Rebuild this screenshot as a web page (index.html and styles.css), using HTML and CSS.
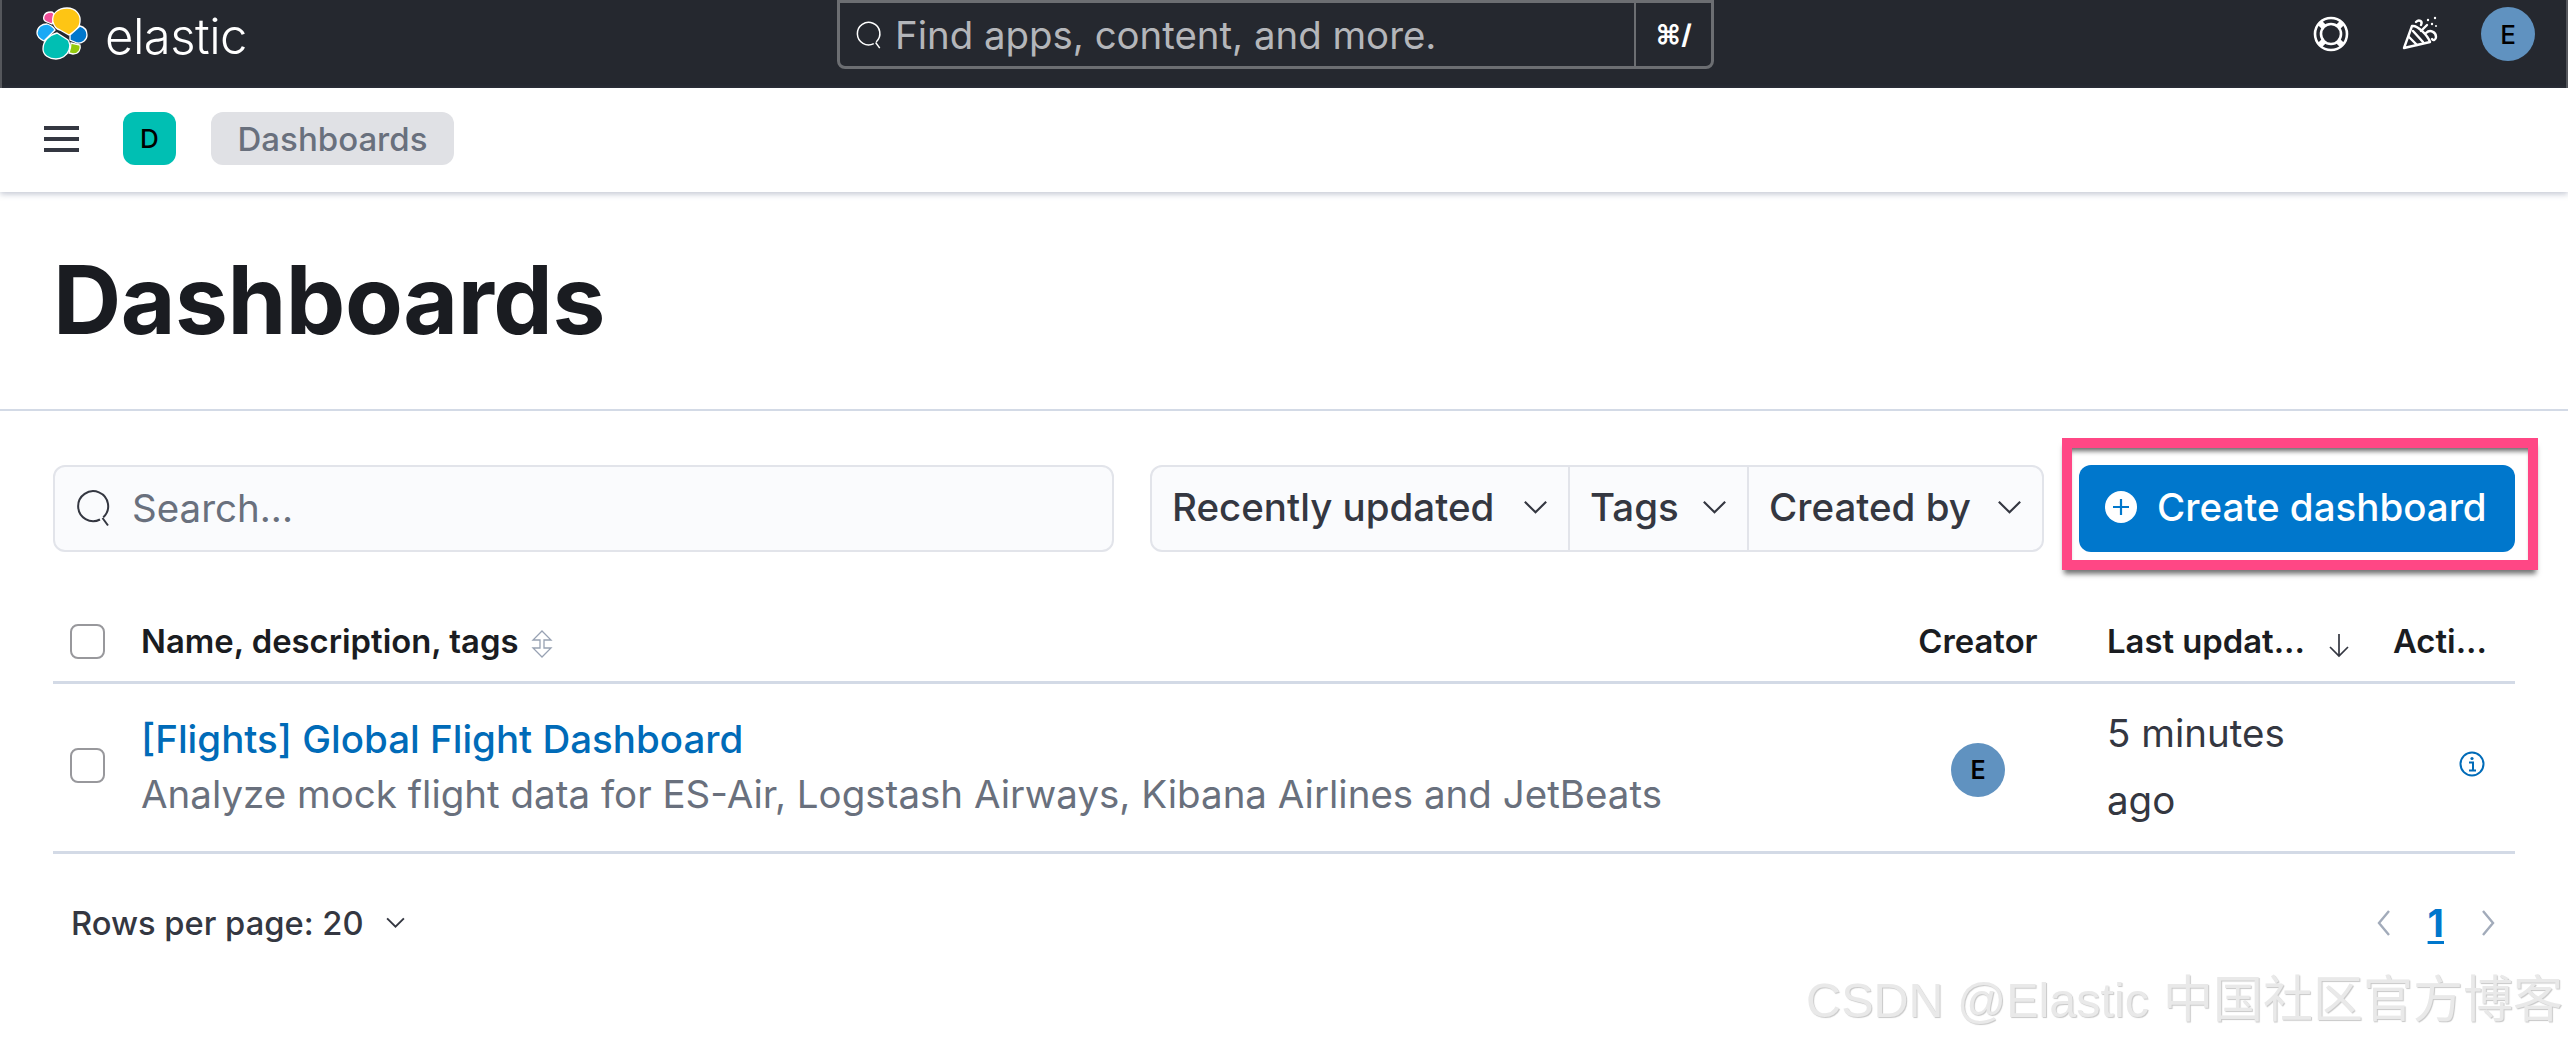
FILE: index.html
```html
<!DOCTYPE html>
<html lang="en">
<head>
    <meta charset="utf-8">
    <title>Dashboards - Elastic</title>
    <link rel="stylesheet" href="styles.css">
</head>
<body>
<div class="topbar">
    <div class="brand">
        <svg class="brand-logo" viewBox="0 0 54 54">
            <g stroke="#fff" stroke-width="1.3">
                <path d="M9 9 C10 6 13 5 16 5 C18 5 19 7 19 9 C19 12 18 14 17 17 L12 15 C9 14 8 12 9 9Z" fill="#f04e98"/>
                <path d="M18 15 C16 6 24 1 32 1 C41 1 46 8 45 15 C45 20 41 24 34 28 L25 23 C21 22 19 19 18 15Z" fill="#fec514"/>
                <path d="M2 26 C2 20 7 17 12 17 C15 18 18 19 20 23 L9 34 C5 32 2 30 2 26Z" fill="#1ba9f5"/>
                <path d="M35 28 L45 19 C49 20 52 23 52 28 C52 33 47 37 42 36 L35 33Z" fill="#0077cc"/>
                <path d="M8 42 C8 34 14 28 22 26 L33 33 C35 36 35 40 34 43 C32 49 26 52 21 52 C14 52 8 48 8 42Z" fill="#00bfb3"/>
                <path d="M36 36 L45 38 C46 42 44 47 38 47 L34 46 C35 43 36 40 36 36Z" fill="#93c90e"/>
            </g>
        </svg>
        <span class="brand-name">elastic</span>
    </div>
    <div class="globalsearch">
        <div class="globalsearch-input">
            <svg class="globalsearch-icon" viewBox="0 0 16 16">
                <path d="M11.3 11.7 A6 6 0 1 0 10 12.6 M11 12 L13.2 15" fill="none" stroke="#fff" stroke-width="0.8"/>
            </svg>
            <span>Find apps, content, and more.</span>
        </div>
        <div class="globalsearch-key">⌘/</div>
    </div>
    <div class="topbar-right">
        <svg class="topbar-icon" viewBox="0 0 36 36">
            <g fill="none" stroke="#fff">
                <circle cx="18" cy="18" r="16" stroke-width="2.6"/>
                <circle cx="18" cy="18" r="10" stroke-width="2.6"/>
                <path d="M7 7 L11 11 M29 7 L25 11 M7 29 L11 25 M29 29 L25 25" stroke-width="6"/>
            </g>
        </svg>
        <svg class="topbar-icon party" viewBox="0 0 36 36">
            <g fill="none" stroke="#fff" stroke-width="2.4" stroke-linejoin="round" stroke-linecap="round">
                <path d="M10 10 L2 32 L28 26 C26 20 16 9 10 10Z"/>
                <path d="M7 21 L15 29 M11 15 L21 26"/>
                <path d="M14 6 C17 3 21 5 19 9 M19 15 L25 9 M24 17 C28 13 34 16 34 21 C34 24 31 25 30 23"/>
            </g>
            <g fill="#fff">
                <circle cx="26" cy="4" r="1.2"/>
                <circle cx="33" cy="2" r="1.2"/>
                <circle cx="30" cy="8" r="1.2"/>
                <circle cx="34" cy="10" r="1"/>
            </g>
        </svg>
        <div class="avatar avatar-user">E</div>
    </div>
</div>

<div class="subnav">
    <div class="hamburger"><i></i><i></i><i></i></div>
    <div class="space-badge">D</div>
    <div class="crumb">Dashboards</div>
</div>

<div class="pageheader">
    <h1>Dashboards</h1>
</div>

<div class="content">
    <div class="toolbar">
        <div class="searchbox">
            <svg class="searchbox-icon" viewBox="0 0 16 16">
                <path d="M11.3 11.7 A6 6 0 1 0 10 12.6 M11 12 L13.2 15" fill="none" stroke="#343741" stroke-width="0.8"/>
            </svg>
            <span>Search...</span>
        </div>
        <div class="filters">
            <div class="filter">Recently updated
                <svg class="chev" viewBox="0 0 20 12"><path d="M2 2 L10 10 L18 2" fill="none" stroke="#343741" stroke-width="1.6"/></svg>
            </div>
            <div class="filter">Tags
                <svg class="chev" viewBox="0 0 20 12"><path d="M2 2 L10 10 L18 2" fill="none" stroke="#343741" stroke-width="1.6"/></svg>
            </div>
            <div class="filter">Created by
                <svg class="chev" viewBox="0 0 20 12"><path d="M2 2 L10 10 L18 2" fill="none" stroke="#343741" stroke-width="1.6"/></svg>
            </div>
        </div>
        <div class="highlight">
            <button class="btncreate">
                <svg class="plus" viewBox="0 0 32 32">
                    <circle cx="16" cy="16" r="16" fill="#fff"/>
                    <path d="M16 8 V24 M8 16 H24" stroke="#0077cc" stroke-width="2.2"/>
                </svg>
                Create dashboard
            </button>
        </div>
    </div>

    <table class="listtable">
        <colgroup>
            <col class="col-check">
            <col>
            <col class="col-creator">
            <col class="col-updated">
            <col class="col-actions">
        </colgroup>
        <thead>
        <tr>
            <th><span class="checkbox"></span></th>
            <th>Name, description, tags
                <svg class="sorticon" viewBox="0 0 22 28">
                    <path d="M11 1 L20 10 H13 V18 H20 L11 27 L2 18 H9 V10 H2Z" fill="none" stroke="#98a2b3" stroke-width="1.3"/>
                </svg>
            </th>
            <th class="creatorcell">Creator</th>
            <th>Last updat...
                <svg class="sortdown" viewBox="0 0 24 26">
                    <path d="M12 2 V24 M3 15 L12 24 L21 15" fill="none" stroke="#343741" stroke-width="1.7"/>
                </svg>
            </th>
            <th>Acti...</th>
        </tr>
        </thead>
        <tbody>
        <tr>
            <td><span class="checkbox"></span></td>
            <td>
                <a class="dashlink" href="#">[Flights] Global Flight Dashboard</a>
                <div class="dashdesc">Analyze mock flight data for ES-Air, Logstash Airways, Kibana Airlines and JetBeats</div>
            </td>
            <td class="creatorcell"><div class="avatar avatar-row">E</div></td>
            <td class="updated">5 minutes ago</td>
            <td class="actioncell">
                <svg class="infoicon" viewBox="0 0 26 26">
                    <circle cx="13" cy="13" r="11.5" fill="none" stroke="#006bb8" stroke-width="2"/>
                    <circle cx="13" cy="7.5" r="1.6" fill="#006bb8"/>
                    <path d="M10 11.5 H14 V19 M10 19.5 H17" fill="none" stroke="#006bb8" stroke-width="2"/>
                </svg>
            </td>
        </tr>
        </tbody>
    </table>

    <div class="pager">
        <div class="rows">Rows per page: 20
            <svg class="chev-small" viewBox="0 0 20 12"><path d="M2 2 L10 10 L18 2" fill="none" stroke="#343741" stroke-width="1.8"/></svg>
        </div>
        <div class="pages">
            <svg class="pagechev" viewBox="0 0 14 28"><path d="M12 2 L2 14 L12 26" fill="none" stroke="#a2abba" stroke-width="2.4"/></svg>
            <a class="pagenum" href="#">1</a>
            <svg class="pagechev" viewBox="0 0 14 28"><path d="M2 2 L12 14 L2 26" fill="none" stroke="#a2abba" stroke-width="2.4"/></svg>
        </div>
    </div>
</div>

<div class="watermark"><span class="watermark-latin">CSDN @Elastic</span> 中国社区官方博客</div>
</body>
</html>
```

FILE: styles.css
```css
* {
    box-sizing: border-box;
}

html, body {
    height: 100%;
}

body {
    margin: 0;
    background-color: #fff;
    font-family: Inter, "Liberation Sans", sans-serif;
    color: #343741;
    overflow: hidden;
    position: relative;
}

.topbar {
    display: flex;
    align-items: flex-start;
    height: 88px;
    background-color: #25282f;
    border-left: 2px solid #55575c;
    border-right: 2px solid #55575c;
    position: relative;
}

.brand {
    display: flex;
    align-items: center;
    width: 835px;
    height: 68px;
    padding-left: 33px;
}

.brand-logo {
    width: 54px;
    height: 54px;
}

.brand-name {
    margin-left: 16px;
    margin-top: 4px;
    font-size: 49px;
    font-weight: 300;
    letter-spacing: -0.5px;
    color: #fff;
}

.globalsearch {
    display: flex;
    width: 877px;
    height: 69px;
    border: 3px solid #6c6e72;
    border-radius: 0 0 8px 8px;
}

.globalsearch-input {
    display: flex;
    align-items: center;
    flex: 1;
    padding-left: 15px;
    font-size: 38.4px;
    color: #b4b6ba;
}

.globalsearch-icon {
    width: 30px;
    height: 30px;
    margin-right: 10px;
}

.globalsearch-key {
    display: flex;
    align-items: center;
    justify-content: center;
    width: 77px;
    border-left: 2px solid #6c6e72;
    font-size: 27px;
    font-weight: 700;
    color: #fff;
}

.topbar-right {
    display: flex;
    align-items: center;
    margin-left: auto;
    height: 68px;
    padding-right: 31px;
}

.topbar-icon {
    width: 36px;
    height: 36px;
    margin-right: 53px;
}

.party {
    margin-right: 43px;
}

.avatar {
    display: flex;
    align-items: center;
    justify-content: center;
    width: 54px;
    height: 54px;
    border-radius: 50%;
    background-color: #6092c0;
    color: #000;
    font-weight: 500;
}

.avatar-user {
    font-size: 26px;
}

.avatar-row {
    font-size: 25px;
    font-weight: 600;
    margin: 5px auto 0;
}

.subnav {
    display: flex;
    align-items: center;
    height: 104px;
    padding-left: 44px;
    padding-bottom: 3px;
    box-shadow: 0 2px 6px rgba(100, 110, 140, 0.4);
    position: relative;
}

.hamburger {
    display: flex;
    flex-direction: column;
    gap: 7px;
    width: 35px;
    margin-right: 44px;
}

.hamburger i {
    display: block;
    height: 4px;
    background-color: #343741;
}

.space-badge {
    display: flex;
    align-items: center;
    justify-content: center;
    width: 53px;
    height: 53px;
    margin-right: 35px;
    border-radius: 12px;
    background-color: #00bfb3;
    color: #000;
    font-size: 26px;
    font-weight: 500;
}

.crumb {
    display: flex;
    align-items: center;
    justify-content: center;
    width: 243px;
    height: 53px;
    border-radius: 12px;
    background-color: #e0e1e5;
    color: #69707d;
    font-size: 33px;
    font-weight: 500;
}

.pageheader {
    height: 219px;
    padding: 53px 53px 0;
    border-bottom: 2px solid #d3dae6;
}

.pageheader h1 {
    margin: 0;
    font-size: 94.5px;
    line-height: 110px;
    font-weight: 700;
    letter-spacing: -0.5px;
    color: #1a1c21;
}

.content {
    padding: 54px 53px 0;
}

.toolbar {
    display: flex;
    align-items: stretch;
    height: 87px;
}

.searchbox {
    display: flex;
    align-items: center;
    width: 1061px;
    margin-right: 36px;
    padding-left: 20px;
    padding-bottom: 1px;
    background-color: #fafbfd;
    border: 2px solid #e2e4ea;
    border-radius: 12px;
    font-size: 38.5px;
    color: #69707d;
}

.searchbox-icon {
    width: 40px;
    height: 40px;
    margin-right: 17px;
}

.filters {
    display: flex;
    width: 894px;
    background-color: #fafbfd;
    border: 2px solid #e2e4ea;
    border-radius: 12px;
}

.filter {
    display: flex;
    align-items: center;
    padding-left: 20px;
    padding-bottom: 3px;
    font-size: 38.5px;
    font-weight: 500;
    color: #343741;
    white-space: nowrap;
    border-left: 2px solid #e2e4ea;
}

.filter:first-child {
    width: 416px;
    border-left: 0;
}

.filter:nth-child(2) {
    width: 179px;
}

.filter:last-child {
    flex: 1;
}

.chev {
    width: 27px;
    height: 16px;
    margin-left: auto;
    margin-right: 19px;
}

/* pink box drawn round the button in the screenshot */
.highlight {
    display: flex;
    margin: -27px -23px -18px 18px;
    padding: 17px 13px 8px 7px;
    border: 10px solid #ff4785;
    box-shadow: inset 0 6px 5px -3px rgba(0, 0, 0, 0.6), 0 6px 5px -2px rgba(0, 0, 0, 0.55);
}

.btncreate {
    display: flex;
    align-items: center;
    flex: none;
    width: 436px;
    margin: 0;
    padding: 0 0 3px 26px;
    border: 0;
    border-radius: 12px;
    background-color: #0077cc;
    color: #fff;
    font-family: inherit;
    font-size: 38.5px;
    font-weight: 500;
    white-space: nowrap;
}

.plus {
    width: 32px;
    height: 32px;
    margin-right: 20px;
}

.listtable {
    width: 100%;
    margin-top: 50px;
    border-collapse: collapse;
    table-layout: fixed;
}

.col-check {
    width: 88px;
}

.col-creator {
    width: 189px;
}

.col-updated {
    width: 286px;
}

.col-actions {
    width: 122px;
}

.listtable th {
    height: 80px;
    padding: 0;
    text-align: left;
    font-size: 32.8px;
    font-weight: 600;
    color: #1a1c21;
    white-space: nowrap;
    border-bottom: 3px solid #d3dae6;
}

.listtable td {
    height: 170px;
    padding: 0;
    vertical-align: middle;
    border-bottom: 3px solid #d3dae6;
}

.checkbox {
    display: block;
    width: 35px;
    height: 35px;
    margin-left: 17px;
    border: 2px solid #98989c;
    border-radius: 8px;
    background-color: #fff;
}

td .checkbox {
    margin-top: -4px;
}

.sorticon {
    width: 22px;
    height: 28px;
    margin-left: 4px;
    vertical-align: -5px;
}

.sortdown {
    width: 24px;
    height: 26px;
    margin-left: 14px;
    vertical-align: -5px;
}

.listtable .creatorcell {
    padding-right: 69px;
    text-align: center;
}

.dashlink {
    display: block;
    font-size: 38.5px;
    line-height: 55px;
    font-weight: 500;
    color: #006bb8;
    text-decoration: none;
}

.dashdesc {
    font-size: 38.5px;
    line-height: 55px;
    color: #69707d;
    white-space: nowrap;
}

.updated {
    padding-right: 90px !important;
    font-size: 38.5px;
    line-height: 67px;
    color: #343741;
}

.actioncell {
    padding-left: 66px !important;
}

.infoicon {
    display: block;
    width: 26px;
    height: 26px;
    margin-top: -6px;
}

.pager {
    display: flex;
    align-items: center;
    justify-content: space-between;
    height: 140px;
    padding-left: 18px;
    padding-bottom: 2px;
}

.rows {
    display: flex;
    align-items: center;
    font-size: 32.7px;
    font-weight: 500;
    color: #343741;
}

.chev-small {
    width: 21px;
    height: 13px;
    margin-left: 21px;
}

.pages {
    display: flex;
    align-items: center;
    padding-right: 20px;
}

.pagechev {
    width: 14px;
    height: 28px;
}

.pagenum {
    margin: 0 37px;
    font-size: 38px;
    font-weight: 700;
    line-height: 40px;
    color: #0077cc;
    text-decoration: underline;
    text-underline-offset: 4px;
}

.watermark {
    position: absolute;
    right: 5px;
    bottom: 14px;
    font-family: "Liberation Sans", "Noto Sans CJK SC", sans-serif;
    font-size: 50px;
    line-height: 56px;
    color: #e9e9e9;
    text-shadow: 1px 1px 1px #c8c8c8;
    white-space: nowrap;
}

.watermark-latin {
    font-size: 48.5px;
}
```
